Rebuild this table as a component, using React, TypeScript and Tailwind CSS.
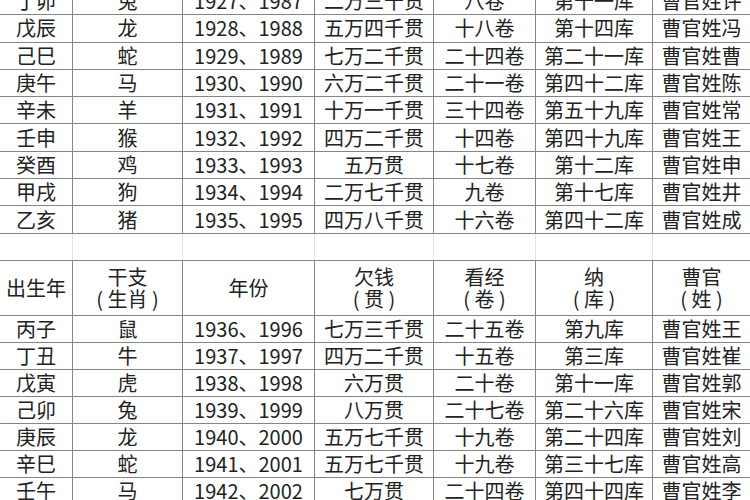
const COLS = ['w-[73px]', 'w-[110px]', 'w-[132px]', 'w-[119px]', 'w-[102px]', 'w-[117px]', 'w-[98px]'];

type Row = [string, string, string, string, string, string, string];

const TOP: Row[] = [
  ['丁卯', '兔', '1927、1987', '二万三千贯', '八卷', '第十一库', '曹官姓许'],
  ['戊辰', '龙', '1928、1988', '五万四千贯', '十八卷', '第十四库', '曹官姓冯'],
  ['己巳', '蛇', '1929、1989', '七万二千贯', '二十四卷', '第二十一库', '曹官姓曹'],
  ['庚午', '马', '1930、1990', '六万二千贯', '二十一卷', '第四十二库', '曹官姓陈'],
  ['辛未', '羊', '1931、1991', '十万一千贯', '三十四卷', '第五十九库', '曹官姓常'],
  ['壬申', '猴', '1932、1992', '四万二千贯', '十四卷', '第四十九库', '曹官姓王'],
  ['癸酉', '鸡', '1933、1993', '五万贯', '十七卷', '第十二库', '曹官姓申'],
  ['甲戌', '狗', '1934、1994', '二万七千贯', '九卷', '第十七库', '曹官姓井'],
  ['乙亥', '猪', '1935、1995', '四万八千贯', '十六卷', '第四十二库', '曹官姓成'],
];

const BOTTOM: Row[] = [
  ['丙子', '鼠', '1936、1996', '七万三千贯', '二十五卷', '第九库', '曹官姓王'],
  ['丁丑', '牛', '1937、1997', '四万二千贯', '十五卷', '第三库', '曹官姓崔'],
  ['戊寅', '虎', '1938、1998', '六万贯', '二十卷', '第十一库', '曹官姓郭'],
  ['己卯', '兔', '1939、1999', '八万贯', '二十七卷', '第二十六库', '曹官姓宋'],
  ['庚辰', '龙', '1940、2000', '五万七千贯', '十九卷', '第二十四库', '曹官姓刘'],
  ['辛巳', '蛇', '1941、2001', '五万七千贯', '十九卷', '第三十七库', '曹官姓高'],
  ['壬午', '马', '1942、2002', '七万贯', '二十四卷', '第四十四库', '曹官姓李'],
];

const HEAD: [string, string?][] = [
  ['出生年'],
  ['干支', '( 生肖 )'],
  ['年份'],
  ['欠钱', '( 贯 )'],
  ['看经', '( 卷 )'],
  ['纳', '( 库 )'],
  ['曹官', '( 姓 )'],
];

const DataRow = ({ row, h }: { row: Row; h: string }) => (
  <div className={`flex ${h} border-b border-[#858585]`}>
    {row.map((cell, i) => (
      <div key={i} className={`${COLS[i]} shrink-0 flex items-center justify-center border-r border-[#858585] whitespace-nowrap`}>
        {cell}
      </div>
    ))}
  </div>
);

export default function App() {
  return (
    <div
      className="w-[750px] h-[500px] overflow-hidden bg-white text-[#222] text-[20px] leading-none"
      style={{ fontFamily: '"Microsoft YaHei", "Noto Sans CJK SC", sans-serif' }}
    >
      <div className="w-[751px] mt-[-12px]">
        {TOP.map((r) => (
          <DataRow key={r[0]} row={r} h="h-[27.3px]" />
        ))}

        {/* spreadsheet gap row, only faint gridlines */}
        <div className="flex h-[27px] border-b border-[#858585]">
          {COLS.map((c, i) => (
            <div key={i} className={`${c} shrink-0 border-r border-[#e4e4e4]`} />
          ))}
        </div>

        <div className="flex h-[55px] border-b border-[#858585]">
          {HEAD.map(([a, b], i) => (
            <div
              key={i}
              className={`${COLS[i]} shrink-0 flex flex-col items-center justify-center border-r border-[#858585] whitespace-pre leading-[22px]`}
            >
              <span>{a}</span>
              {b && <span>{b}</span>}
            </div>
          ))}
        </div>

        {BOTTOM.map((r) => (
          <DataRow key={r[0]} row={r} h="h-[27px]" />
        ))}
      </div>
    </div>
  );
}
